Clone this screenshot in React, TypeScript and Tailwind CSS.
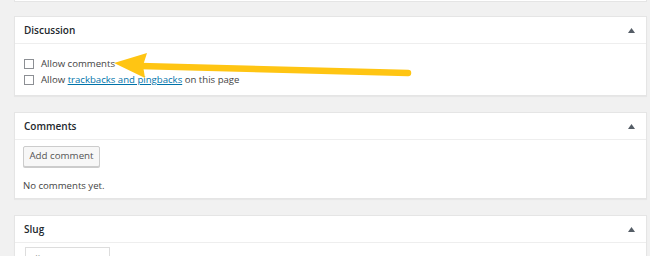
import React from "react";

function Toggle() {
  return (
    <svg width="7" height="5" viewBox="0 0 7 5" className="shrink-0">
      <path d="M3.5 0 L7 5 L0 5 Z" fill="#555d66" />
    </svg>
  );
}

function Postbox({
  title,
  children,
  bodyClass,
}: {
  title: string;
  children?: React.ReactNode;
  bodyClass?: string;
}) {
  return (
    <div className="bg-white border border-[#e5e5e5] shadow-[0_1px_1px_rgba(0,0,0,0.04)]">
      <div className="h-[27px] flex items-center justify-between pl-[9px] pr-[11px] border-b border-[#eeeeee]">
        <h2 className="text-[10px] font-semibold text-[#23282d]">{title}</h2>
        <Toggle />
      </div>
      <div className={bodyClass}>{children}</div>
    </div>
  );
}

function Check({ children }: { children: React.ReactNode }) {
  return (
    <label className="h-[16px] flex items-center gap-[7px]">
      <span className="w-[10px] h-[10px] border border-[#8c8f94] bg-white shrink-0" />
      <span>{children}</span>
    </label>
  );
}

export default function App() {
  return (
    <div
      className="relative w-[650px] h-[256px] overflow-hidden bg-[#f1f1f1] text-[#444] text-[9.6px]"
      style={{ fontFamily: '"Open Sans", "Noto Sans", sans-serif' }}
    >
      <div className="pl-[14px] pr-[3px]">
        <div className="h-[2px] bg-white border-x border-b border-[#e5e5e5]" />

        <div className="mt-[14px]">
          <Postbox title="Discussion" bodyClass="pl-[9px] pt-[12px] pb-[7px]">
            <Check>Allow comments</Check>
            <Check>
              Allow{" "}
              <a href="#" className="text-[#0073aa] underline">
                trackbacks and pingbacks
              </a>{" "}
              on this page
            </Check>
          </Postbox>
        </div>

        <div className="mt-[16px]">
          <Postbox title="Comments" bodyClass="pl-[8px] pt-[6px] pb-[5px]">
            <button className="h-[21px] w-[77px] rounded-[2px] border border-[#cccccc] bg-[#f7f7f7] shadow-[0_1px_0_#cccccc] text-[#555] text-[9.75px]">
              Add comment
            </button>
            <p className="mt-[12px] leading-[14px]">No comments yet.</p>
          </Postbox>
        </div>

        <div className="mt-[16px]">
          <Postbox title="Slug" bodyClass="pl-[10px] pt-[4px]">
            <div className="w-[85px] h-[22px] border border-[#dddddd] bg-white px-[4px] pt-[4px] text-[#999]">
              allow-comments
            </div>
          </Postbox>
        </div>
      </div>

      <svg className="absolute inset-0 pointer-events-none" width="650" height="256">
        <line x1="140" y1="66" x2="408" y2="73" stroke="#ffc513" strokeWidth="6.5" strokeLinecap="round" />
        <path d="M114 63 L147 53 L143 65.5 L145 78 Z" fill="#ffc513" />
      </svg>
    </div>
  );
}
